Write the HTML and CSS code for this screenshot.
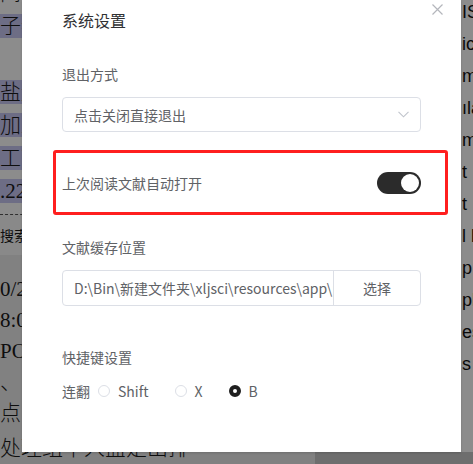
FILE: index.html
```html
<!DOCTYPE html>
<html lang="zh">
<head>
<meta charset="utf-8">
<link rel="stylesheet" href="styles.css">
</head>
<body>
<div class="page">
  <div class="doc-left">
    <div class="top-lines">
      <div class="ln">间</div>
      <div class="ln"><span class="hl">子参数</span></div>
      <div class="ln"></div>
      <div class="ln"><span class="hl">盐量</span></div>
      <div class="ln"><span class="hl">加工</span></div>
      <div class="ln"><span class="hl">工艺</span></div>
      <div class="ln"><span class="hl">.22</span></div>
    </div>
    <div class="toolbar">搜索</div>
    <div class="bottom-lines">
      <div class="ln">0/2</div>
      <div class="ln">8:0</div>
      <div class="ln">PO</div>
      <div class="ln">、 纟</div>
      <div class="ln">点 t</div>
      <div class="ln last">处理组中入盐是出排</div>
    </div>
  </div>
  <div class="side">
    <div class="doc-right">
      <div class="rl">IS</div>
      <div class="rl">ic</div>
      <div class="rl">m</div>
      <div class="rl">ıla</div>
      <div class="rl">m</div>
      <div class="rl">t</div>
      <div class="rl">t</div>
      <div class="rl">l l</div>
      <div class="rl">p</div>
      <div class="rl">pl</div>
      <div class="rl">es</div>
      <div class="rl">s</div>
    </div>
    <div class="foot"></div>
  </div>
</div>
<div class="mask"></div>

<div class="dialog">
  <div class="dialog-header">
    <span class="dialog-title">系统设置</span>
    <span class="close" aria-label="close">
      <svg width="11" height="11" viewBox="0 0 11 11"><path d="M0.5 0.5L10.5 10.5M10.5 0.5L0.5 10.5" stroke="#b4b6bc" stroke-width="1.2" fill="none"/></svg>
    </span>
  </div>
  <div class="dialog-body">
    <div class="label first">退出方式</div>
    <div class="select">
      <span>点击关闭直接退出</span>
      <svg class="chev" width="11" height="7" viewBox="0 0 11 7"><path d="M0.5 0.8L5.5 5.8L10.5 0.8" stroke="#c0c4cc" stroke-width="1.1" fill="none"/></svg>
    </div>
    <div class="highlight-row">
      <span class="row-text">上次阅读文献自动打开</span>
      <span class="switch"><span class="knob"></span></span>
    </div>
    <div class="label">文献缓存位置</div>
    <div class="input-group">
      <div class="path">D:\Bin\新建文件夹\xljsci\resources\app\public</div>
      <div class="btn">选择</div>
    </div>
    <div class="label section">快捷键设置</div>
    <div class="radios">
      <span class="radio-label">连翻</span>
      <span class="radio"><span class="dot"></span>Shift</span>
      <span class="radio"><span class="dot"></span>X</span>
      <span class="radio"><span class="dot checked"></span>B</span>
    </div>
  </div>
</div>
</body>
</html>
```

FILE: styles.css
```css
html, body {
  margin: 0;
  padding: 0;
}
body {
  width: 473px;
  height: 464px;
  overflow: hidden;
  background: #ffffff;
  position: relative;
}
.page {
  display: flex;
  height: 464px;
}
.doc-left {
  width: 315px;
  flex: none;
  height: 464px;
  overflow: hidden;
  font-family: "Liberation Serif", "Noto Sans CJK SC", serif;
  color: #1a1a1a;
}
.top-lines {
  margin-top: -23px;
}
.ln {
  font-size: 21px;
  font-weight: 300;
  line-height: 33px;
  height: 33px;
  white-space: nowrap;
}
.hl {
  background: #c6c6f2;
  padding-right: 300px;
}
.toolbar {
  margin-top: 6px;
  border-top: 1px dashed #555;
  height: 40px;
  line-height: 40px;
  font-size: 14px;
  font-family: "Noto Sans CJK SC", sans-serif;
  background: #fafafa;
}
.bottom-lines {
  background: #ececec;
  padding-top: 19px;
  height: 240px;
}
.bottom-lines .ln {
  line-height: 31px;
  height: 31px;
}
.bottom-lines .ln.last {
  margin-top: 4px;
}
.side {
  flex: 1;
  display: flex;
  flex-direction: column;
}
.doc-right {
  flex: 1;
  width: 11px;
  margin-left: auto;
  overflow: hidden;
  font-family: "Liberation Sans", sans-serif;
  font-size: 18px;
  color: #111;
}
.rl {
  height: 32px;
  line-height: 24px;
  white-space: nowrap;
}
.foot {
  height: 12px;
  background: #c8c8c8;
}
.mask {
  position: absolute;
  inset: 0;
  background: rgba(0, 0, 0, 0.45);
}

.dialog {
  position: absolute;
  left: 22px;
  top: 0;
  width: 439px;
  height: 452px;
  background: #fff;
  box-shadow: 0 1px 2px rgba(0, 0, 0, 0.15);
  font-family: "Noto Sans CJK SC", "Microsoft YaHei", sans-serif;
  box-sizing: border-box;
  padding: 0 40px;
}
.dialog-header {
  height: 40px;
  display: flex;
  align-items: center;
}
.dialog-title {
  font-size: 16px;
  color: #303133;
  line-height: 20px;
}
.close {
  position: absolute;
  right: 18px;
  top: 4px;
  width: 11px;
  height: 11px;
  display: block;
}
.close svg {
  display: block;
}
.label {
  font-size: 14px;
  line-height: 20px;
  color: #606266;
  margin-top: 22px;
  margin-bottom: 13px;
}
.label.first {
  margin-top: 24px;
}
.label.section {
  margin-top: 41px;
  margin-bottom: 14px;
}
.select {
  height: 35px;
  box-sizing: border-box;
  border: 1px solid #dcdfe6;
  border-radius: 4px;
  display: flex;
  align-items: center;
  justify-content: space-between;
  padding: 0 11px;
  font-size: 14px;
  color: #606266;
}
.chev {
  display: block;
}
.highlight-row {
  margin: 18px -27px 0 -9px;
  height: 65px;
  box-sizing: border-box;
  border: 3px solid #ff1f1f;
  border-radius: 3px;
  padding: 0 24px 0 6px;
  display: flex;
  align-items: center;
  justify-content: space-between;
}
.row-text {
  font-size: 14px;
  color: #606266;
  line-height: 20px;
}
.switch {
  width: 44px;
  height: 22px;
  border-radius: 11px;
  background: #2b2b2b;
  display: flex;
  align-items: center;
  justify-content: flex-end;
  padding: 0 2px;
  box-sizing: border-box;
}
.knob {
  width: 18px;
  height: 18px;
  border-radius: 50%;
  background: #fff;
}
.input-group {
  height: 36px;
  display: flex;
  box-sizing: border-box;
  border: 1px solid #dcdfe6;
  border-radius: 4px;
  font-size: 14px;
  color: #606266;
}
.path {
  flex: 1;
  min-width: 0;
  overflow: hidden;
  white-space: nowrap;
  padding-left: 11px;
  line-height: 34px;
}
.btn {
  width: 86px;
  flex: none;
  border-left: 1px solid #dcdfe6;
  text-align: center;
  line-height: 34px;
}
.radios {
  display: flex;
  align-items: center;
  font-size: 14px;
  color: #606266;
  line-height: 20px;
}
.radio-label {
  margin-right: 8px;
}
.radio {
  display: flex;
  align-items: center;
  margin-right: 26px;
}
.dot {
  width: 12px;
  height: 12px;
  box-sizing: border-box;
  border: 1px solid #dcdfe6;
  border-radius: 50%;
  margin-right: 8px;
}
.dot.checked {
  border: 4px solid #1f1f1f;
}
```
